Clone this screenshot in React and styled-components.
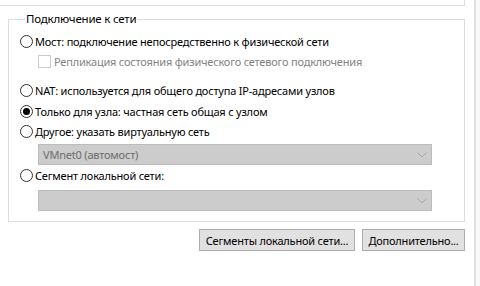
import styled, { createGlobalStyle } from 'styled-components';

const GlobalStyle = createGlobalStyle`
  html, body {
    margin: 0;
    padding: 0;
    background: #fff;
  }
  body {
    font-family: 'Segoe UI', 'Noto Sans', sans-serif;
    font-size: 11px;
    letter-spacing: -0.2px;
    color: #000;
  }
`;

const App = () => {
  return (
    <>
      <GlobalStyle />
      <Page>
        <Main>
          <PrevGroup />
          <Group>
            <Legend>Подключение к сети</Legend>
            <Row>
              <Radio />
              Мост: подключение непосредственно к физической сети
            </Row>
            <Row $disabled>
              <Checkbox />
              Репликация состояния физического сетевого подключения
            </Row>
            <Row $mt='9px'>
              <Radio />
              NAT: используется для общего доступа IP-адресами узлов
            </Row>
            <Row $mt='1px'>
              <Radio $checked />
              Только для узла: частная сеть общая с узлом
            </Row>
            <Row>
              <Radio />
              Другое: указать виртуальную сеть
            </Row>
            <Select $mt='3px'>
              <span>VMnet0 (автомост)</span>
              <Chevron />
            </Select>
            <Row>
              <Radio />
              Сегмент локальной сети:
            </Row>
            <Select $mt='5px'>
              <span />
              <Chevron />
            </Select>
          </Group>
          <Buttons>
            <Button $w='156px'>Сегменты локальной сети...</Button>
            <Button $w='103px'>Дополнительно...</Button>
          </Buttons>
        </Main>
        <SideEdge />
      </Page>
    </>
  );
};

const Chevron = () => (
  <svg width='10' height='6' viewBox='0 0 10 6'>
    <path d='M0.5 0.5 L5 5 L9.5 0.5' fill='none' stroke='#a8a8a8' strokeWidth='1' />
  </svg>
);

const Page = styled.div`
  display: flex;
  width: 480px;
  height: 286px;
  overflow: hidden;
`;

const Main = styled.div`
  width: 474px;
  display: flex;
  flex-direction: column;
`;

const SideEdge = styled.div`
  flex: 1;
  border-left: 2px solid #e2dfe2;
  background: #faf8fa;
`;

const PrevGroup = styled.div`
  width: 465px;
  height: 6px;
  box-sizing: border-box;
  border-right: 1px solid #dcdcdc;
  border-bottom: 1px solid #dcdcdc;
`;

const Group = styled.fieldset`
  margin: 5px 0 0 8px;
  width: 457px;
  height: 211px;
  box-sizing: border-box;
  min-width: 0;
  border: 1px solid #dcdcdc;
  padding: 4px 0 0 11px;
  display: flex;
  flex-direction: column;
`;

const Legend = styled.legend`
  padding: 0 1px;
  margin-left: 5px;
  line-height: 16px;
  height: 16px;
  font-size: 11.5px;
`;

const Row = styled.label`
  display: flex;
  align-items: center;
  gap: 2px;
  height: 20px;
  margin-top: ${(p) => p.$mt || '0'};
  color: ${(p) => (p.$disabled ? '#838383' : '#000')};
  white-space: nowrap;
`;

const Radio = styled.span`
  flex: none;
  width: 13px;
  height: 13px;
  box-sizing: border-box;
  border: 1px solid #333;
  border-radius: 50%;
  background: #fff;
  display: flex;
  align-items: center;
  justify-content: center;

  &::after {
    content: '';
    display: ${(p) => (p.$checked ? 'block' : 'none')};
    width: 7px;
    height: 7px;
    border-radius: 50%;
    background: #000;
  }
`;

const Checkbox = styled.span`
  flex: none;
  width: 13px;
  height: 13px;
  box-sizing: border-box;
  border: 1px solid #cccccc;
  background: #fff;
  margin-left: 18px;
  margin-right: 1px;
`;

const Select = styled.div`
  margin-top: ${(p) => p.$mt || '0'};
  margin-left: 18px;
  width: 394px;
  height: 21px;
  box-sizing: border-box;
  background: #cccccc;
  border: 1px solid #bcbcbc;
  padding: 0 4px 0 4px;
  display: flex;
  align-items: center;
  justify-content: space-between;
  color: #6d6d6d;
`;

const Buttons = styled.div`
  width: 465px;
  display: flex;
  justify-content: flex-end;
  gap: 7px;
  margin-top: 7px;
`;

const Button = styled.button`
  width: ${(p) => p.$w};
  height: 22px;
  box-sizing: border-box;
  padding: 0;
  font-family: inherit;
  font-size: 11px;
  letter-spacing: -0.2px;
  white-space: nowrap;
  color: #000;
  background: #e1e1e1;
  border: 1px solid #adadad;
  border-radius: 0;
`;

export default App;
